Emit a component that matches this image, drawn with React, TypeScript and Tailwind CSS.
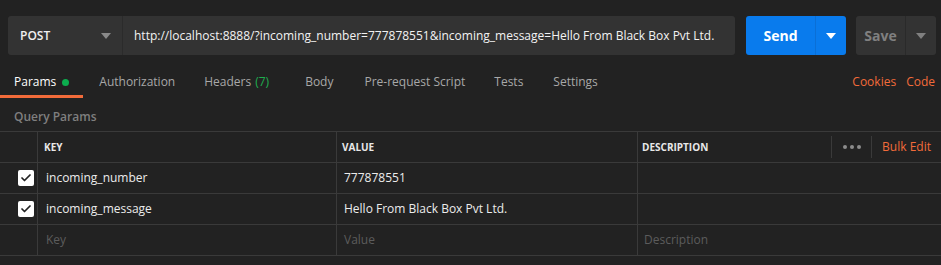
import { Check } from 'lucide-react';

const font = { fontFamily: '"Open Sans", "Noto Sans", sans-serif' };

const tabs = [
  { label: 'Authorization', pl: 'pl-[16px]' },
  { label: 'Headers', count: '(7)', pl: 'pl-[29px]' },
  { label: 'Body', pl: 'pl-[36px]' },
  { label: 'Pre-request Script', pl: 'pl-[31px]' },
  { label: 'Tests', pl: 'pl-[29px]' },
  { label: 'Settings', pl: 'pl-[30px]' },
];

const rows = [
  { key: 'incoming_number', value: '777878551' },
  { key: 'incoming_message', value: 'Hello From Black Box Pvt Ltd.' },
];

function Caret({ className }: { className: string }) {
  return (
    <svg width="10" height="6" viewBox="0 0 10 6" className={className}>
      <path d="M0 0h10L5 6z" fill="currentColor" />
    </svg>
  );
}

export default function App() {
  return (
    <div className="w-[941px] h-[265px] bg-[#222222] text-[#f0f0f0] overflow-hidden" style={font}>
      {/* Request bar */}
      <div className="flex items-center h-[39px] mt-4 pl-2 pr-[5px]">
        <div className="flex h-full w-[727px] shrink-0 bg-[#333333] rounded-[3px] overflow-hidden">
          <div className="flex shrink-0 items-center justify-between w-[115px] pl-3 pr-[11px] border-r border-[#2b2b2b]">
            <span className="text-[12px] font-semibold">POST</span>
            <Caret className="text-[#8a8a8a]" />
          </div>
          <div className="flex items-center pl-[11px] text-[12px] text-[#f2f2f2] whitespace-nowrap">
            http://localhost:8888/?incoming_number=777878551&amp;incoming_message=Hello From Black Box Pvt Ltd.
          </div>
        </div>
        <div className="flex shrink-0 h-full w-[100px] ml-[11px] bg-[#097bed] rounded-[3px]">
          <div className="flex items-center justify-center w-[70px] border-r border-[#0a6fd6] text-[14px] font-bold text-white">
            Send
          </div>
          <div className="flex flex-1 items-center justify-center">
            <Caret className="text-white" />
          </div>
        </div>
        <div className="flex shrink-0 h-full w-[80px] ml-[10px] bg-[#333333] rounded-[3px]">
          <div className="flex items-center justify-center w-[50px] border-r border-[#2a2a2a] text-[14px] font-bold text-[#808080]">
            Save
          </div>
          <div className="flex flex-1 items-center justify-center">
            <Caret className="text-[#808080]" />
          </div>
        </div>
      </div>

      {/* Tabs */}
      <div className="flex items-stretch h-[43px] text-[12px]">
        <div className="flex items-center pl-[14px] pr-[14px] border-b-[3px] border-[#f26b3a] text-white pt-[14px]">
          Params
          <span className="ml-[6px] w-[7px] h-[7px] rounded-full bg-[#0cad4e]" />
        </div>
        {tabs.map((t) => (
          <div key={t.label} className={`flex items-center ${t.pl} text-[#a8a8a8] pt-[14px] border-b-[3px] border-transparent`}>
            {t.label}
            {t.count && <span className="ml-1 text-[#1fad4f]">{t.count}</span>}
          </div>
        ))}
        <div className="flex items-center ml-auto pr-[6px] pt-[14px] text-[#f26b3a] border-b-[3px] border-transparent">
          <span>Cookies</span>
          <span className="ml-[10px]">Code</span>
        </div>
      </div>

      {/* Query params */}
      <div className="h-[33px] pl-[14px] pt-[10px] text-[12px] font-semibold text-[#7f7f7f]">Query Params</div>
      <div className="border-t border-[#3a3a3a] text-[12px]">
        <div className="grid grid-cols-[38px_299px_301px_1fr] h-[31px] border-b border-[#3a3a3a]">
          <div className="border-r border-[#3a3a3a]" />
          <div className="flex items-center pl-[6px] border-r border-[#3a3a3a] text-[10px] font-bold text-[#e8e8e8]">KEY</div>
          <div className="flex items-center pl-[5px] border-r border-[#3a3a3a] text-[10px] font-bold text-[#e8e8e8]">VALUE</div>
          <div className="flex items-center pl-[4px]">
            <span className="text-[10px] font-bold text-[#e8e8e8]">DESCRIPTION</span>
            <div className="ml-auto flex items-center h-[22px]">
              <div className="h-full border-l border-[#3a3a3a]" />
              <div className="flex gap-[3px] pl-[11px] pr-[10px]">
                <span className="w-[4px] h-[4px] rounded-full bg-[#8c8c8c]" />
                <span className="w-[4px] h-[4px] rounded-full bg-[#8c8c8c]" />
                <span className="w-[4px] h-[4px] rounded-full bg-[#8c8c8c]" />
              </div>
              <div className="h-full border-l border-[#3a3a3a]" />
              <span className="pl-[10px] pr-[10px] text-[12px] text-[#f26b3a]">Bulk Edit</span>
            </div>
          </div>
        </div>
        {rows.map((r) => (
          <div key={r.key} className="grid grid-cols-[38px_299px_301px_1fr] h-[31px] border-b border-[#3a3a3a]">
            <div className="flex items-center pl-[18px] border-r border-[#3a3a3a]">
              <span className="flex items-center justify-center w-4 h-4 bg-white rounded-[2px]">
                <Check className="w-[12px] h-[12px] text-[#222222]" strokeWidth={3.5} />
              </span>
            </div>
            <div className="flex items-center pl-[8px] border-r border-[#3a3a3a] text-[#ececec]">{r.key}</div>
            <div className="flex items-center pl-[7px] border-r border-[#3a3a3a] text-[#ececec]">{r.value}</div>
            <div />
          </div>
        ))}
        <div className="grid grid-cols-[38px_299px_301px_1fr] h-[31px] border-b border-[#3a3a3a] text-[#5c5c5c]">
          <div className="border-r border-[#3a3a3a]" />
          <div className="flex items-center pl-[8px] border-r border-[#3a3a3a]">Key</div>
          <div className="flex items-center pl-[7px] border-r border-[#3a3a3a]">Value</div>
          <div className="flex items-center pl-[6px]">Description</div>
        </div>
      </div>
    </div>
  );
}
